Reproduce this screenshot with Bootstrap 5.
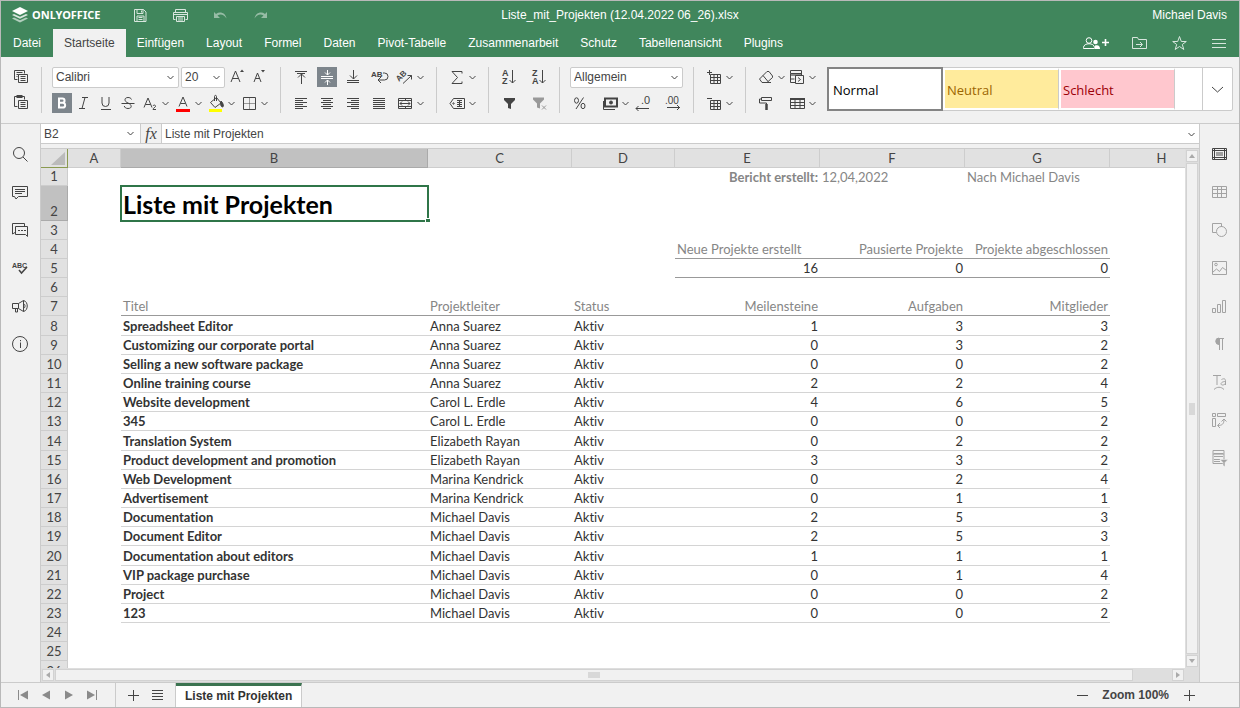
<!DOCTYPE html>
<html lang="de">
<head>
<meta charset="utf-8">
<meta name="viewport" content="width=device-width, initial-scale=1">
<title>Liste_mit_Projekten (12.04.2022 06_26).xlsx</title>
<link rel="stylesheet" href="https://cdn.jsdelivr.net/npm/bootstrap@5.3.0/dist/css/bootstrap.min.css">
<style>
  :root { --brand:#40865c; --panel:#f1f1f1; --line:#cbcbcb; --ink:#444; --cell:Lato,"Noto Sans",sans-serif; }
  body { font:12px/16px "Liberation Sans",Arial,sans-serif; color:var(--ink); background:var(--panel); }
  button { font:inherit; color:inherit; background:none; border:0; padding:0; }
  svg { display:block; fill:none; stroke:currentColor; stroke-width:1; }
  svg text { stroke:none; fill:currentColor; }
  .ico { width:20px; height:20px; }
  .app { border:1px solid #b9b9b9; }
  .app-head { background:var(--brand); color:#fff; }
  .title-row, .tab-row { height:28px; }
  .side-part { flex:1 1 0; }
  .user-name { margin-right:12px; }
  .brand-mark { margin:0 4px 0 11px; stroke:none; }
  .brand-name { font:700 11px/16px "Noto Sans",sans-serif; color:#fff; }
  .quick { margin-left:30px; gap:20px; }
  .ghost { opacity:.45; }
  .soft { opacity:.8; }
  .ribbon-nav { padding-left:1px; }
  .ribbon-tab { color:#fff; padding:6px 11px; text-decoration:none; }
  .ribbon-tab.active { background:var(--panel); color:var(--ink); margin-left:1px; }
  .head-actions { gap:20px; padding-right:10px; }
  .ribbon { height:67px; padding:10px 6px 0 0; border-bottom:1px solid var(--line); }
  .tool-group { height:46px; padding:0 10px; border-right:1px solid var(--line); }
  .tool-group.narrow { width:41px; padding:0; }
  .tool-group.last { border:0; padding-right:9px; }
  .tool-line { height:20px; display:flex; align-items:center; }
  .tool-line + .tool-line { margin-top:6px; }
  .gap-tight { gap:2px; } .gap-wide { gap:6px; } .gap-sort { gap:10px; }
  .tool { width:20px; height:20px; flex:none; }
  .tool.on { background:#7d858c; color:#fff; }
  .spaced { margin-right:11px; }
  .drop { width:11px; height:20px; display:flex; align-items:center; justify-content:center; flex:none; }
  .drop svg { width:7px; height:7px; }
  .pick { appearance:none; height:21px; border:1px solid var(--line); border-radius:2px; color:var(--ink); padding:0 16px 0 3px;
    background:#fff url("data:image/svg+xml,%3Csvg xmlns='http://www.w3.org/2000/svg' width='7' height='7' fill='none' stroke='%23444'%3E%3Cpath d='M.5 2l3 3 3-3'/%3E%3C/svg%3E") no-repeat right 4px center; }
  .pick.font { width:127px; } .pick.size { width:44px; } .pick.format { width:113px; }
  .gallery { height:44px; border:1px solid var(--line); border-radius:2px; background:#fff; }
  .style-card { width:116px; text-align:left; padding:2px 0 0 4px; font:13px/20px "Open Sans",sans-serif; border:2px solid #fff; border-right:1px solid var(--line); }
  .style-card.active { border:2px solid #848484; color:#000; margin:-1px 0 -1px -1px; }
  .neutral, .bad { padding-left:2px; background-clip:padding-box; }
  .neutral { background-color:#ffeb9c; color:#9c6500; }
  .bad { background-color:#ffc7ce; color:#9c0006; }
  .gallery-more { width:30px; border-left:1px solid var(--line); }
  .rail { width:40px; flex:none; padding:20px 2px 0 0; gap:18px; }
  .rail.start { border-right:1px solid var(--line); }
  .rail.end { border-left:1px solid var(--line); color:#a3a3a3; }
  .rail.end .on-dark { color:#444; }
  .formula-row { height:20px; background:#fff; border-bottom:1px solid var(--line); }
  .name-box { width:100px; border:0; height:19px; border-right:1px solid var(--line); border-radius:0; background-position:right 6px center; }
  .fx { width:21px; background:var(--panel); border-right:1px solid var(--line); font:italic 16px/16px "Liberation Serif",serif; }
  .formula-row input { border:0; outline:0; padding:0 3px; color:var(--ink); min-width:0; }
  .formula-row .drop { width:16px; }
  .sheet-area { display:grid; grid-template:minmax(0,1fr) 14px / minmax(0,1fr) 14px; margin-top:4px; border-top:1px solid var(--line); }
  .sheet-view { overflow:hidden; background:#fff; }
  .sheet { table-layout:fixed; width:1173px; border-collapse:separate; border-spacing:0; font:13px/18px var(--cell); color:#333; font-variant-ligatures:none; }
  .sheet th, .sheet td { padding:0 2px; white-space:nowrap; overflow:visible; vertical-align:middle; }
  .sheet tr { height:19px; }
  .sheet tbody tr:nth-child(6n+2) { height:20px; }
  .sheet tbody tr:nth-child(1) { height:18px; }
  .sheet tbody tr:nth-child(2) { height:35px; }
  .sheet thead th, .sheet tbody th { background:#e1e1e1; border-right:1px solid #cdcdcd; border-bottom:1px solid #cdcdcd; text-align:center; font:13px/17px var(--cell); color:#444; }
  .sheet tbody th { vertical-align:bottom; }
  .sheet thead th { height:19px; }
  .sheet thead th.sel, .sheet tbody th.sel { background:#c1c1c1; border-color:#aaa; }
  .sheet thead th.corner { border-color:#8a9a50; padding:0; }
  .corner svg { width:14px; height:13px; margin-left:auto; margin-right:2px; }
  .sheet td.cursor { position:relative; outline:2px solid #2f7548; outline-offset:-1px; font:700 25px/32px var(--cell); color:#000; }
  .cursor::after { content:""; position:absolute; right:-2px; bottom:-2px; width:5px; height:5px; background:#2f7548; border:1px solid #fff; border-right:0; }
  .num { text-align:right; }
  .dim { color:#868686; }
  .rule { border-bottom:1px solid #999; }
  .hair { border-bottom:1px solid #d4d4d4; }
  .bar-v, .bar-h { background:#dedede; padding:1px; gap:1px; display:flex; color:#aaa; }
  .bar-v { flex-direction:column; }
  .bar-v span, .bar-v button, .bar-h span, .bar-h button { background:#f1f1f1; border:1px solid #d2d2d2; display:flex; align-items:center; justify-content:center; }
  .bar-v button { height:12px; } .bar-h button { width:12px; }
  .bar-v span { flex:1; } .bar-h span { flex:1; margin-right:38px; }
  .bar-v i { width:6px; height:12px; background:#d8d8d8; } .bar-h i { width:12px; height:6px; background:#d8d8d8; }
  .bar-v svg, .bar-h svg { width:6px; height:6px; fill:currentColor; stroke:none; }
  .status { height:25px; border-top:1px solid var(--line); }
  .page-nav { width:115px; padding-left:12px; gap:3px; color:#8a8a8a; border-right:1px solid var(--line); }
  .sheet-tools { width:60px; gap:4px; padding-left:7px; border-right:1px solid var(--line); }
  .sheet-tab { background:#fff; border-top:3px solid #3b7350; border-right:1px solid var(--line); font-weight:700; padding:0 9px 2px; color:#333; }
  .zoom-set { gap:10px; padding-right:40px; font-weight:700; }
</style>
</head>
<body>
<svg class="d-none" aria-hidden="true">
  <symbol id="chev" viewBox="0 0 7 7"><path d="M.5 2l3 3 3-3"/></symbol>
  <symbol id="copy" viewBox="0 0 20 20"><path d="M6.500 12.500h-3v-9h10v3M5.500 5.500h6M5.500 7.500h2M5.500 9.500h1M7.500 7.500h9v8h-9zM9.500 9.500h5M9.500 11.500h5M9.500 13.500h5"/></symbol>
  <symbol id="paste" viewBox="0 0 20 20"><path d="M6.500 13.500h-3v-10h10v3M7.500 7.500h9v8h-9zM9.500 9.500h5M9.500 11.500h5M9.500 13.500h5"/><path d="M5.500 3.500h6" stroke-width="3"/></symbol>
  <symbol id="grow" viewBox="0 0 20 20"><path d="M4 15l4.500-11L13 15M5.500 11.500h6"/><path d="M13 5l2-2.500L17 5z" fill="currentColor" stroke="none"/></symbol>
  <symbol id="shrink" viewBox="0 0 20 20"><path d="M5 15l3.500-9L12 15M6.500 11.500h4.500"/><path d="M12 3h4l-2 2.500z" fill="currentColor" stroke="none"/></symbol>
  <symbol id="bold" viewBox="0 0 20 20"><path d="M7 5.500v9h3.800a2.300 2.300 0 000-4.700H7h3.400a2.100 2.100 0 000-4.300z" stroke-width="2"/></symbol>
  <symbol id="italic" viewBox="0 0 20 20"><path d="M8 4.500h6M5 15.500h6M11 4.500l-3 11"/></symbol>
  <symbol id="under" viewBox="0 0 20 20"><path d="M6 4v6a3.500 3.500 0 007 0V4M5 16.500h10"/></symbol>
  <symbol id="strike" viewBox="0 0 20 20"><path d="M13.500 6.500C13 5 11.500 4.500 10 4.500c-4 0-4 4 0 5.500s4.500 5.500 0 5.500c-2 0-3.500-1-3.700-2.500M3.500 10.500h13"/></symbol>
  <symbol id="subs" viewBox="0 0 20 20"><path d="M4 14.500L8 5l4 9.500M5.500 11.500h5M13 13c.5-1.500 3-1 2.500.5-.3 1-2.500 1.500-2.500 3h3"/></symbol>
  <symbol id="color" viewBox="0 0 20 20"><path d="M6 13.500L10 4l4 9.500M7.500 10.500h5"/><path d="M3 17.500h14" stroke="#f00" stroke-width="3"/></symbol>
  <symbol id="fill" viewBox="0 0 20 20"><path d="M4.500 9.500l6-5 4.500 5.500-6 4.500zM8.500 8V3.500c0-1.500 2-1.500 2 0V8"/><path d="M15 8c2.500 2 3 6 1.500 6S14 11 15 8z" fill="currentColor"/><path d="M3 17.500h13" stroke="#ff0" stroke-width="3"/></symbol>
  <symbol id="borders" viewBox="0 0 20 20"><path d="M4.500 4.500h12v12h-12z"/><path d="M5 10.500h11M10.500 5v11" opacity=".5"/></symbol>
  <symbol id="top" viewBox="0 0 20 20"><path d="M4 4.500h12M6 6.500h8M10.500 6v11M7 10.500l3.500-3.500 3.500 3.500"/></symbol>
  <symbol id="mid" viewBox="0 0 20 20"><path d="M4 9.500h12M4 11.500h12M10.500 3v5M8 5.500l2.500 2.500 2.500-2.500M10.500 13v5M8 15.500l2.500-2.500 2.500 2.500"/></symbol>
  <symbol id="bot" viewBox="0 0 20 20"><path d="M4 13.500h12M4 15.500h12M10.500 3v9M7 8.500l3.500 3.500 3.500-3.500"/></symbol>
  <symbol id="wrap" viewBox="0 0 20 20"><text x="2" y="10" font-size="8" font-weight="700">AB</text><path d="M14 6h1.500a3.500 3.500 0 010 7H9M12 10l-3 3 3 3"/></symbol>
  <symbol id="orient" viewBox="0 0 20 20"><text x="1" y="12" font-size="8" font-weight="700" transform="rotate(-45 6 10)">AB</text><path d="M8 16.500l8.500-8M12.500 8.500h4v4"/></symbol>
  <symbol id="al" viewBox="0 0 20 20"><path d="M4 5.500h12M4 7.500h8M4 9.500h12M4 11.500h8M4 13.500h12M4 15.500h8"/></symbol>
  <symbol id="ac" viewBox="0 0 20 20"><path d="M4 5.500h12M6 7.500h8M4 9.500h12M6 11.500h8M4 13.500h12M6 15.500h8"/></symbol>
  <symbol id="ar" viewBox="0 0 20 20"><path d="M4 5.500h12M8 7.500h8M4 9.500h12M8 11.500h8M4 13.500h12M8 15.500h8"/></symbol>
  <symbol id="aj" viewBox="0 0 20 20"><path d="M4 5.500h12M4 7.500h12M4 9.500h12M4 11.500h12M4 13.500h12M4 15.500h12"/></symbol>
  <symbol id="merge" viewBox="0 0 20 20"><path d="M3.500 5.500h13v10h-13zM3 7.500h14M3 13.500h14M10.500 5v2M10.500 14v2M5 10.500h10M7 8.500l-2 2 2 2M13 8.500l2 2-2 2"/></symbol>
  <symbol id="sum" viewBox="0 0 20 20"><path d="M15 6.500v-2H5l5.500 6L5 16.500h10v-2"/></symbol>
  <symbol id="named" viewBox="0 0 20 20"><path d="M6.500 5.500h11v10h-11L3 10.500zM10 7.500h5M10 9.500h5M10 11.500h5M10 13.500h5M12.500 7v7"/><circle cx="6.500" cy="10.500" r=".7"/></symbol>
  <symbol id="az" viewBox="0 0 20 20"><text x="3" y="9" font-size="9" font-weight="700">A</text><text x="3" y="17" font-size="9" font-weight="700">Z</text><path d="M13.500 3v13M10.500 13l3 3 3-3"/></symbol>
  <symbol id="za" viewBox="0 0 20 20"><text x="3" y="9" font-size="9" font-weight="700">Z</text><text x="3" y="17" font-size="9" font-weight="700">A</text><path d="M13.500 3v13M10.500 13l3 3 3-3"/></symbol>
  <symbol id="funnel" viewBox="0 0 20 20"><path d="M5 5h11v2l-4 4v5l-3-1v-4L5 7z" fill="currentColor" stroke="none"/></symbol>
  <symbol id="unfilter" viewBox="0 0 20 20"><path d="M4 4.500h11v2l-4 4v5l-3-1v-4l-4-4z" fill="currentColor" stroke="none"/><path d="M13 12.500l4 4M17 12.500l-4 4"/></symbol>
  <symbol id="percent" viewBox="0 0 20 20"><ellipse cx="6.500" cy="7.500" rx="2" ry="2.700"/><ellipse cx="13" cy="13" rx="2" ry="2.700"/><path d="M13.500 4.500L6 16"/></symbol>
  <symbol id="money" viewBox="0 0 20 20"><path d="M5 5.500h12v8H5z" stroke-width="2"/><path d="M3.500 8v8.500H15"/><circle cx="11" cy="9.500" r="1.500" fill="currentColor"/></symbol>
  <symbol id="decm" viewBox="0 0 20 20"><text x="8" y="11" font-size="11">.0</text><path d="M16 15.500H3M5.500 13L3 15.500 5.500 18"/></symbol>
  <symbol id="decp" viewBox="0 0 20 20"><text x="2" y="11" font-size="10">.00</text><path d="M4 14.500h13M14 12l2.500 2.500L14 17"/></symbol>
  <symbol id="cellins" viewBox="0 0 20 20"><path d="M6.500 7.500h10v9h-10zM10 7v10M13.500 7v10M6 10.500h11M6 13.500h11M3 5.500h5M5.500 3v5"/></symbol>
  <symbol id="celldel" viewBox="0 0 20 20"><path d="M6.500 7.500h10v9h-10zM10 7v10M13.500 7v10M6 10.500h11M6 13.500h11M3 5.500h5"/></symbol>
  <symbol id="eraser" viewBox="0 0 20 20"><path d="M3.500 12L11 4.500h2L16.500 9v1.500L11 15.500H6zM7 8.500l5 6M6 15.500h9"/></symbol>
  <symbol id="cond" viewBox="0 0 20 20"><path d="M3.500 3.500h11v3h-11zM3.500 6.500v9H8M3.500 12h4M14.500 6v2M8.500 8.500h8v8h-8zM11 10.500l2.500 2-2.500 2"/><path d="M4 7h10v2H4z" fill="currentColor" stroke="none" opacity=".6"/></symbol>
  <symbol id="roller" viewBox="0 0 20 20"><path d="M5.500 4.500h10v3h-10zM5.500 6h-2v4h7v1"/><path d="M10.500 11v6" stroke-width="2.500"/></symbol>
  <symbol id="tbl" viewBox="0 0 20 20"><path d="M3.500 5.500h14v10h-14zM3 9.500h15M3 12.500h15M8 5v10M13 5v10"/><path d="M3 5h15v2H3z" fill="currentColor" stroke="none"/></symbol>
  <symbol id="save" viewBox="0 0 20 20"><path d="M4.500 4.500h9l2.500 2.500v9.500H4.500zM7 4.500v4h6v-4M7 16V11h7v5M8.500 12.500h4M8.500 14.500h4M11.500 5.500v2"/></symbol>
  <symbol id="print" viewBox="0 0 20 20"><path d="M5.500 7V4.500h10V7M5.500 14.500h-2v-7h14v7h-2M6.500 11.500h8v5h-8zM4 9.500h13M8 13h5M8 15h5"/></symbol>
  <symbol id="undo" viewBox="0 0 20 20"><path d="M4 7v6h6L7.500 10.500c3-2 6.500-1 9 3-1-5.500-6.500-7.500-10.500-4.500z" fill="currentColor" stroke="none"/></symbol>
  <symbol id="redo" viewBox="0 0 20 20"><path d="M17 7v6h-6l2.500-2.500c-3-2-6.500-1-9 3 1-5.500 6.500-7.500 10.500-4.500z" fill="currentColor" stroke="none"/></symbol>
  <symbol id="share" viewBox="0 0 28 20"><circle cx="8" cy="7.500" r="2.800"/><path d="M2.500 15.500v-1c0-5 11-5 11 0v1z"/><circle cx="14.500" cy="9" r="2.300" fill="currentColor" stroke="none"/><path d="M14 16v-3.500c3-1 5 0 5 3.500z" fill="currentColor" stroke="none"/><path d="M21 9.500h7M24.500 6v7" stroke-width="1.600"/></symbol>
  <symbol id="folder" viewBox="0 0 20 20"><path d="M3.500 4.500h5l1 2h8v9h-14zM7 11.500h6M11 9l2.500 2.500L11 14"/></symbol>
  <symbol id="star" viewBox="0 0 20 20"><path d="M10.500 3.500l1.800 5h5l-4 3 1.500 5-4.300-3-4.300 3 1.500-5-4-3h5z"/></symbol>
  <symbol id="menu" viewBox="0 0 20 20"><path d="M3 6.500h14M3 10.500h14M3 14.500h14"/></symbol>
  <symbol id="find" viewBox="0 0 20 20"><circle cx="9" cy="9" r="5.500"/><path d="M13 13l4.500 4.500"/></symbol>
  <symbol id="comment" viewBox="0 0 20 20"><path d="M2.500 4.500h15v10h-9l-2.500 2.500-1.500-2.500h-2zM5 7.500h10M5 9.500h10M5 11.500h7"/></symbol>
  <symbol id="chat" viewBox="0 0 20 20"><path d="M5 12.500l-2.500 1.500V3.500h12v3M5.500 6.500h12v10l-2-2h-10zM8 10.500h2M11 10.500h2M14 10.500h2"/></symbol>
  <symbol id="spell" viewBox="0 0 20 20"><text x="2" y="10" font-size="7" font-weight="700">ABC</text><path d="M9 12l2.500 3L17 9" stroke-width="1.500"/></symbol>
  <symbol id="horn" viewBox="0 0 20 20"><path d="M2.500 7.500h6l5-3v11l-5-3h-6zM5.500 13v3h2v-3M8.500 7.500v5M13.500 4.500c5 1 5 10 0 11M13.500 7.500c2 1 2 4 0 5"/></symbol>
  <symbol id="info" viewBox="0 0 20 20"><circle cx="10" cy="10" r="7.500"/><path d="M10.500 8.500v5.500M10.500 6v1.200"/></symbol>
  <symbol id="cells" viewBox="0 0 20 20"><path d="M3.500 4.500h14v11h-14zM3 6.500h15M3 13.500h15M5.500 4v12M15.500 4v12"/><path d="M7 8h7v4H7z" fill="#a0a0a0" stroke="none"/></symbol>
  <symbol id="grid3" viewBox="0 0 20 20"><path d="M3.500 4.500h14v11h-14zM3 7.500h15M3 11.500h15M8.500 5v11M12.500 5v11"/></symbol>
  <symbol id="shapes" viewBox="0 0 20 20"><path d="M7 12.500H3.500v-9h9V7"/><circle cx="12.500" cy="11.500" r="5"/></symbol>
  <symbol id="image" viewBox="0 0 20 20"><path d="M3.500 3.500h14v13h-14zM4 14l3.500-3 3 2.500 3-4 4 3"/><circle cx="7" cy="6.500" r="1.300"/></symbol>
  <symbol id="chart" viewBox="0 0 20 20"><path d="M3.500 12.500h3v4h-3zM8.500 8.500h3v8h-3zM13.500 4.500h3v12h-3z"/></symbol>
  <symbol id="para" viewBox="0 0 20 20"><path d="M10 4a3.200 3.200 0 000 6.500z" fill="currentColor"/><path d="M9 4.500h6M10.500 4v12M13.500 4v12"/></symbol>
  <symbol id="textart" viewBox="0 0 20 20"><path d="M4 3.500h8M8 3.500v9.500M12.500 7.500c3-1.500 4-.5 4 1.500v4M16.500 9.500c-5 0-5.500 3.500-3 3.500 1.500 0 3-1 3-2M5 17.500c3-3 7-3 10 0"/></symbol>
  <symbol id="pivot" viewBox="0 0 20 20"><path d="M3.500 3.500h3v3h-3zM8.500 3.500h8v3h-8zM3.500 8.500h3v8h-3zM9 15.500c4 0 6-1.500 6-6M11 13l-2.500 2.500L11 18M12.500 11.500L15 9l2.500 2.500"/></symbol>
  <symbol id="slicer" viewBox="0 0 20 20"><path d="M4 2.500h11v13H4zM5 5.500h9M5 8.500h9M5 11.500h6M5 13.500h6"/><path d="M4 5h11v2H4z" fill="currentColor" stroke="none" opacity=".6"/><path d="M11 11.500h8l-3 3v4l-2-1v-3z" fill="currentColor" stroke="var(--panel)" stroke-width=".5"/></symbol>
  <symbol id="first" viewBox="0 0 20 20"><path d="M5.500 5v10"/><path d="M15 5.500v9L7 10z" fill="currentColor" stroke="none"/></symbol>
  <symbol id="prev" viewBox="0 0 20 20"><path d="M14 5.500v9L6 10z" fill="currentColor" stroke="none"/></symbol>
  <symbol id="next" viewBox="0 0 20 20"><path d="M6 5.500v9l8-4.500z" fill="currentColor" stroke="none"/></symbol>
  <symbol id="last" viewBox="0 0 20 20"><path d="M14.500 5v10"/><path d="M5 5.500v9l8-4.500z" fill="currentColor" stroke="none"/></symbol>
  <symbol id="plus" viewBox="0 0 20 20"><path d="M5 10.500h11M10.500 5v11"/></symbol>
  <symbol id="minus" viewBox="0 0 20 20"><path d="M5 10.500h11"/></symbol>
  <symbol id="list" viewBox="0 0 20 20"><path d="M5 5.500h11M5 8.500h11M5 11.500h11M5 14.500h11"/></symbol>
</svg>

<div class="app d-flex flex-column vh-100">
  <header class="app-head">
    <div class="title-row d-flex align-items-center">
      <div class="side-part d-flex align-items-center">
        <svg class="brand-mark" width="16" height="16" viewBox="0 0 16 16" aria-hidden="true"><path fill="#fff" opacity=".6" d="M0 11.500l2-1 6 2.700 6-2.700 2 1L8 15.500z"/><path fill="#fff" opacity=".8" d="M0 8l2-1 6 2.700L14 7l2 1-8 3.800z"/><path fill="#fff" d="M8 0l8 4-8 4-8-4z"/></svg>
        <span class="brand-name">ONLYOFFICE</span>
        <div class="quick d-flex">
          <button aria-label="Speichern" class="soft"><svg class="ico"><use href="#save"/></svg></button>
          <button aria-label="Drucken" class="soft"><svg class="ico"><use href="#print"/></svg></button>
          <button aria-label="Rückgängig" class="ghost"><svg class="ico"><use href="#undo"/></svg></button>
          <button aria-label="Wiederholen" class="ghost"><svg class="ico"><use href="#redo"/></svg></button>
        </div>
      </div>
      <div>Liste_mit_Projekten (12.04.2022 06_26).xlsx</div>
      <div class="side-part text-end"><span class="user-name">Michael Davis</span></div>
    </div>
    <div class="tab-row d-flex">
      <nav class="ribbon-nav d-flex" aria-label="Menüband">
        <a class="ribbon-tab" href="#">Datei</a><a class="ribbon-tab active" href="#">Startseite</a><a class="ribbon-tab" href="#">Einfügen</a><a class="ribbon-tab" href="#">Layout</a><a class="ribbon-tab" href="#">Formel</a><a class="ribbon-tab" href="#">Daten</a><a class="ribbon-tab" href="#">Pivot-Tabelle</a><a class="ribbon-tab" href="#">Zusammenarbeit</a><a class="ribbon-tab" href="#">Schutz</a><a class="ribbon-tab" href="#">Tabellenansicht</a><a class="ribbon-tab" href="#">Plugins</a>
      </nav>
      <div class="head-actions d-flex align-items-center ms-auto">
        <button aria-label="Freigeben"><svg width="28" height="20"><use href="#share"/></svg></button>
        <button aria-label="Dateispeicherort öffnen" class="soft"><svg class="ico"><use href="#folder"/></svg></button>
        <button aria-label="Favorit" class="soft"><svg class="ico"><use href="#star"/></svg></button>
        <button aria-label="Einstellungen" class="soft"><svg class="ico"><use href="#menu"/></svg></button>
      </div>
    </div>
  </header>

  <div class="ribbon d-flex flex-shrink-0">
    <div class="tool-group narrow d-flex flex-column align-items-center">
      <div class="tool-line"><button class="tool" aria-label="Kopieren"><svg class="ico"><use href="#copy"/></svg></button></div>
      <div class="tool-line"><button class="tool" aria-label="Einfügen"><svg class="ico"><use href="#paste"/></svg></button></div>
    </div>
    <div class="tool-group">
      <div class="tool-line gap-tight">
        <select class="pick font" aria-label="Schriftart"><option>Calibri</option></select>
        <select class="pick size" aria-label="Schriftgrad"><option>20</option></select>
        <button class="tool" aria-label="Schrift vergrößern"><svg class="ico"><use href="#grow"/></svg></button>
        <button class="tool" aria-label="Schrift verkleinern"><svg class="ico"><use href="#shrink"/></svg></button>
      </div>
      <div class="tool-line gap-tight">
        <button class="tool on" aria-label="Fett"><svg class="ico"><use href="#bold"/></svg></button>
        <button class="tool" aria-label="Kursiv"><svg class="ico"><use href="#italic"/></svg></button>
        <button class="tool" aria-label="Unterstrichen"><svg class="ico"><use href="#under"/></svg></button>
        <button class="tool" aria-label="Durchgestrichen"><svg class="ico"><use href="#strike"/></svg></button>
        <div class="d-flex"><button class="tool" aria-label="Tiefgestellt"><svg class="ico"><use href="#subs"/></svg></button><button class="drop" aria-label="Mehr"><svg><use href="#chev"/></svg></button></div>
        <div class="d-flex"><button class="tool" aria-label="Schriftfarbe"><svg class="ico"><use href="#color"/></svg></button><button class="drop" aria-label="Mehr"><svg><use href="#chev"/></svg></button></div>
        <div class="d-flex"><button class="tool" aria-label="Füllfarbe"><svg class="ico"><use href="#fill"/></svg></button><button class="drop" aria-label="Mehr"><svg><use href="#chev"/></svg></button></div>
        <div class="d-flex"><button class="tool" aria-label="Rahmen"><svg class="ico"><use href="#borders"/></svg></button><button class="drop" aria-label="Mehr"><svg><use href="#chev"/></svg></button></div>
      </div>
    </div>
    <div class="tool-group">
      <div class="tool-line gap-wide">
        <button class="tool" aria-label="Oben"><svg class="ico"><use href="#top"/></svg></button>
        <button class="tool on" aria-label="Mitte"><svg class="ico"><use href="#mid"/></svg></button>
        <button class="tool" aria-label="Unten"><svg class="ico"><use href="#bot"/></svg></button>
        <button class="tool" aria-label="Umbruch"><svg class="ico"><use href="#wrap"/></svg></button>
        <div class="d-flex"><button class="tool" aria-label="Ausrichtung"><svg class="ico"><use href="#orient"/></svg></button><button class="drop" aria-label="Mehr"><svg><use href="#chev"/></svg></button></div>
      </div>
      <div class="tool-line gap-wide">
        <button class="tool" aria-label="Links"><svg class="ico"><use href="#al"/></svg></button>
        <button class="tool" aria-label="Zentriert"><svg class="ico"><use href="#ac"/></svg></button>
        <button class="tool" aria-label="Rechts"><svg class="ico"><use href="#ar"/></svg></button>
        <button class="tool" aria-label="Blocksatz"><svg class="ico"><use href="#aj"/></svg></button>
        <div class="d-flex"><button class="tool" aria-label="Verbinden"><svg class="ico"><use href="#merge"/></svg></button><button class="drop" aria-label="Mehr"><svg><use href="#chev"/></svg></button></div>
      </div>
    </div>
    <div class="tool-group">
      <div class="tool-line"><button class="tool" aria-label="Summe"><svg class="ico"><use href="#sum"/></svg></button><button class="drop" aria-label="Mehr"><svg><use href="#chev"/></svg></button></div>
      <div class="tool-line"><button class="tool" aria-label="Benannte Bereiche"><svg class="ico"><use href="#named"/></svg></button><button class="drop" aria-label="Mehr"><svg><use href="#chev"/></svg></button></div>
    </div>
    <div class="tool-group">
      <div class="tool-line gap-sort"><button class="tool" aria-label="Aufsteigend"><svg class="ico"><use href="#az"/></svg></button><button class="tool" aria-label="Absteigend"><svg class="ico"><use href="#za"/></svg></button></div>
      <div class="tool-line gap-sort"><button class="tool" aria-label="Filter"><svg class="ico"><use href="#funnel"/></svg></button><button class="tool opacity-50" aria-label="Filter leeren"><svg class="ico"><use href="#unfilter"/></svg></button></div>
    </div>
    <div class="tool-group">
      <div class="tool-line"><select class="pick format" aria-label="Zahlenformat"><option>Allgemein</option></select></div>
      <div class="tool-line gap-tight">
        <button class="tool" aria-label="Prozent"><svg class="ico"><use href="#percent"/></svg></button>
        <div class="d-flex ms-2"><button class="tool" aria-label="Währung"><svg class="ico"><use href="#money"/></svg></button><button class="drop" aria-label="Mehr"><svg><use href="#chev"/></svg></button></div>
        <button class="tool" aria-label="Dezimalstelle löschen"><svg class="ico"><use href="#decm"/></svg></button>
        <button class="tool ms-2" aria-label="Dezimalstelle hinzufügen"><svg class="ico"><use href="#decp"/></svg></button>
      </div>
    </div>
    <div class="tool-group">
      <div class="tool-line"><button class="tool" aria-label="Zellen einfügen"><svg class="ico"><use href="#cellins"/></svg></button><button class="drop" aria-label="Mehr"><svg><use href="#chev"/></svg></button></div>
      <div class="tool-line"><button class="tool" aria-label="Zellen löschen"><svg class="ico"><use href="#celldel"/></svg></button><button class="drop" aria-label="Mehr"><svg><use href="#chev"/></svg></button></div>
    </div>
    <div class="tool-group last">
      <div class="tool-line"><button class="tool" aria-label="Leeren"><svg class="ico"><use href="#eraser"/></svg></button><button class="drop" aria-label="Mehr"><svg><use href="#chev"/></svg></button><button class="tool" aria-label="Bedingte Formatierung"><svg class="ico"><use href="#cond"/></svg></button><button class="drop" aria-label="Mehr"><svg><use href="#chev"/></svg></button></div>
      <div class="tool-line"><button class="tool spaced" aria-label="Format übertragen"><svg class="ico"><use href="#roller"/></svg></button><button class="tool" aria-label="Als Tabelle formatieren"><svg class="ico"><use href="#tbl"/></svg></button><button class="drop" aria-label="Mehr"><svg><use href="#chev"/></svg></button></div>
    </div>
    <div class="gallery d-flex flex-fill">
      <button class="style-card active">Normal</button><button class="style-card neutral">Neutral</button><button class="style-card bad">Schlecht</button>
      <button class="gallery-more ms-auto d-flex align-items-center justify-content-center" aria-label="Weitere Formate"><svg width="13" height="13" viewBox="0 0 13 13"><path d="M1 4l5.500 5L12 4"/></svg></button>
    </div>
  </div>

  <main class="d-flex flex-fill overflow-hidden">
    <aside class="rail start d-flex flex-column align-items-center">
      <button aria-label="Suchen"><svg class="ico"><use href="#find"/></svg></button>
      <button aria-label="Kommentare"><svg class="ico"><use href="#comment"/></svg></button>
      <button aria-label="Chat"><svg class="ico"><use href="#chat"/></svg></button>
      <button aria-label="Rechtschreibprüfung"><svg class="ico"><use href="#spell"/></svg></button>
      <button aria-label="Feedback"><svg class="ico"><use href="#horn"/></svg></button>
      <button aria-label="Info"><svg class="ico"><use href="#info"/></svg></button>
    </aside>
    <section class="d-flex flex-column flex-fill overflow-hidden">
      <div class="formula-row d-flex flex-shrink-0">
        <select class="pick name-box" aria-label="Namensfeld"><option>B2</option></select>
        <button class="fx" aria-label="Funktion einfügen">fx</button>
        <input class="flex-fill" aria-label="Formel" value="Liste mit Projekten">
        <button class="drop" aria-label="Bearbeitungsleiste erweitern"><svg><use href="#chev"/></svg></button>
      </div>
      <div class="sheet-area flex-fill overflow-hidden">
        <div class="sheet-view">
          <table class="sheet">
            <colgroup><col style="width:27px"><col style="width:53px"><col style="width:307px"><col style="width:144px"><col style="width:103px"><col style="width:145px"><col style="width:145px"><col style="width:145px"><col style="width:104px"></colgroup>
            <thead><tr><th class="corner"><svg viewBox="0 0 14 13"><path d="M14 0v13H0z" fill="#bbb" stroke="none"/></svg></th><th>A</th><th class="sel">B</th><th>C</th><th>D</th><th>E</th><th>F</th><th>G</th><th>H</th></tr></thead>
            <tbody id="rows"></tbody>
          </table>
        </div>
        <div class="bar-v"><button aria-label="Nach oben"><svg viewBox="0 0 6 6"><path d="M0 5l3-4 3 4z"/></svg></button><span><i></i></span><button aria-label="Nach unten"><svg viewBox="0 0 6 6"><path d="M0 1l3 4 3-4z"/></svg></button></div>
        <div class="bar-h"><button aria-label="Nach links"><svg viewBox="0 0 6 6"><path d="M5 0L1 3l4 3z"/></svg></button><span><i></i></span><button aria-label="Nach rechts"><svg viewBox="0 0 6 6"><path d="M1 0l4 3-4 3z"/></svg></button></div>
        <div class="bar-v"></div>
      </div>
    </section>
    <aside class="rail end d-flex flex-column align-items-center">
      <button class="on-dark" aria-label="Zelle"><svg class="ico"><use href="#cells"/></svg></button>
      <button aria-label="Tabelle"><svg class="ico"><use href="#grid3"/></svg></button>
      <button aria-label="Form"><svg class="ico"><use href="#shapes"/></svg></button>
      <button aria-label="Bild"><svg class="ico"><use href="#image"/></svg></button>
      <button aria-label="Diagramm"><svg class="ico"><use href="#chart"/></svg></button>
      <button aria-label="Absatz"><svg class="ico"><use href="#para"/></svg></button>
      <button aria-label="TextArt"><svg class="ico"><use href="#textart"/></svg></button>
      <button aria-label="Pivot"><svg class="ico"><use href="#pivot"/></svg></button>
      <button aria-label="Datenschnitt"><svg class="ico"><use href="#slicer"/></svg></button>
    </aside>
  </main>

  <footer class="status d-flex flex-shrink-0">
    <div class="page-nav d-flex align-items-center">
      <button aria-label="Erstes Blatt"><svg class="ico"><use href="#first"/></svg></button>
      <button aria-label="Vorheriges Blatt"><svg class="ico"><use href="#prev"/></svg></button>
      <button aria-label="Nächstes Blatt"><svg class="ico"><use href="#next"/></svg></button>
      <button aria-label="Letztes Blatt"><svg class="ico"><use href="#last"/></svg></button>
    </div>
    <div class="sheet-tools d-flex align-items-center">
      <button aria-label="Blatt hinzufügen"><svg class="ico"><use href="#plus"/></svg></button>
      <button aria-label="Blattliste"><svg class="ico"><use href="#list"/></svg></button>
    </div>
    <button class="sheet-tab">Liste mit Projekten</button>
    <div class="zoom-set d-flex align-items-center ms-auto">
      <button aria-label="Verkleinern"><svg class="ico"><use href="#minus"/></svg></button>
      <span>Zoom 100%</span>
      <button aria-label="Vergrößern"><svg class="ico"><use href="#plus"/></svg></button>
    </div>
  </footer>
</div>

<script>
  const projects = [
    ["Spreadsheet Editor","Anna Suarez",1,3,3],["Customizing our corporate portal","Anna Suarez",0,3,2],
    ["Selling a new software package","Anna Suarez",0,0,2],["Online training course","Anna Suarez",2,2,4],
    ["Website development","Carol L. Erdle",4,6,5],["345","Carol L. Erdle",0,0,2],
    ["Translation System","Elizabeth Rayan",0,2,2],["Product development and promotion","Elizabeth Rayan",3,3,2],
    ["Web Development","Marina Kendrick",0,2,4],["Advertisement","Marina Kendrick",0,1,1],
    ["Documentation","Michael Davis",2,5,3],["Document Editor","Michael Davis",2,5,3],
    ["Documentation about editors","Michael Davis",1,1,1],["VIP package purchase","Michael Davis",0,1,4],
    ["Project","Michael Davis",0,0,2],["123","Michael Davis",0,0,2]
  ];
  const td = (text = "", cls = "") => `<td class="${cls}">${text}</td>`;
  const blank = n => td().repeat(n);
  const special = {
    1: blank(4) + td("Bericht erstellt:", "num dim fw-bold") + td("12,04,2022", "dim") + td("Nach Michael Davis", "dim"),
    2: blank(1) + td("Liste mit Projekten", "cursor") + blank(5),
    4: blank(4) + td("Neue Projekte erstellt", "dim rule") + td("Pausierte Projekte", "dim rule num") + td("Projekte abgeschlossen", "dim rule num"),
    5: blank(4) + td(16, "rule num") + td(0, "rule num") + td(0, "rule num"),
    7: blank(1) + ["Titel", "Projektleiter", "Status"].map(t => td(t, "dim rule")).join("") + ["Meilensteine", "Aufgaben", "Mitglieder"].map(t => td(t, "dim rule num")).join("")
  };
  let html = "";
  for (let r = 1; r <= 26; r++) {
    const p = projects[r - 8];
    const cells = special[r] || (p
      ? blank(1) + td(p[0], "hair fw-bold") + td(p[1], "hair") + td("Aktiv", "hair") + p.slice(2).map(n => td(n, "hair num")).join("")
      : blank(7));
    html += `<tr><th scope="row"${r === 2 ? ' class="sel"' : ""}>${r}</th>${cells}${blank(1)}</tr>`;
  }
  document.getElementById("rows").innerHTML = html;
</script>
<script src="https://cdn.jsdelivr.net/npm/bootstrap@5.3.0/dist/js/bootstrap.bundle.min.js"></script>
</body>
</html>
